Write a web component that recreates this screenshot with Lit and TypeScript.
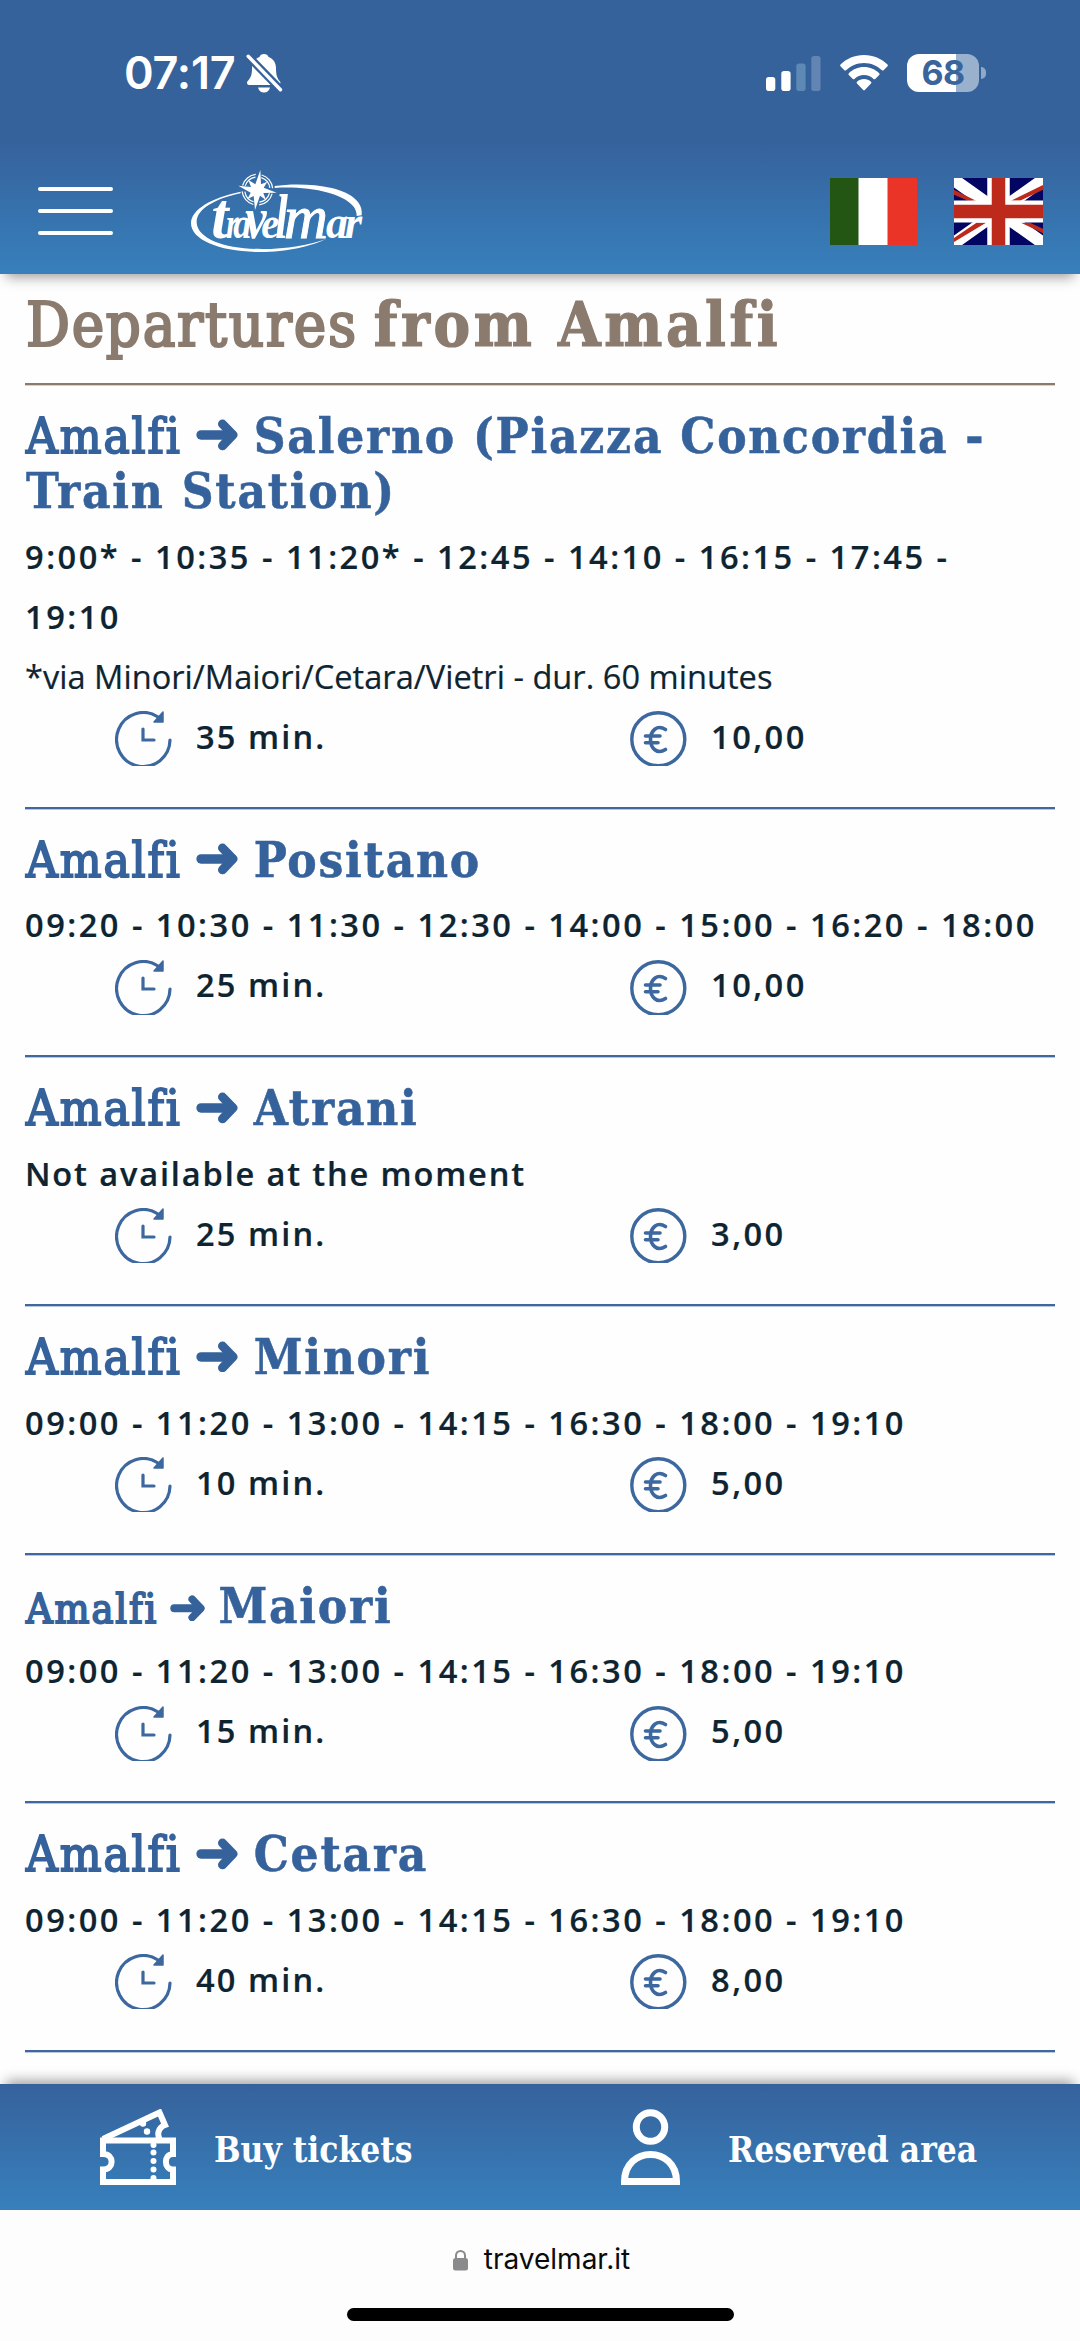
import { LitElement, html, css, svg, nothing } from "lit";
import { customElement, property } from "lit/decorators.js";
import { classMap } from "lit/directives/class-map.js";

interface Route {
  to: string;
  times: string[];
  plain?: boolean;
  note?: string;
  minutes: number;
  price: string;
  smallFrom?: boolean;
}

const ROUTES: Route[] = [
  {
    to: "Salerno (Piazza Concordia - Train Station)",
    times: ["9:00* - 10:35 - 11:20* - 12:45 - 14:10 - 16:15 - 17:45 -", "19:10"],
    note: "*via Minori/Maiori/Cetara/Vietri - dur. 60 minutes",
    minutes: 35,
    price: "10,00",
  },
  { to: "Positano", times: ["09:20 - 10:30 - 11:30 - 12:30 - 14:00 - 15:00 - 16:20 - 18:00"], minutes: 25, price: "10,00" },
  { to: "Atrani", times: ["Not available at the moment"], plain: true, minutes: 25, price: "3,00" },
  { to: "Minori", times: ["09:00 - 11:20 - 13:00 - 14:15 - 16:30 - 18:00 - 19:10"], minutes: 10, price: "5,00" },
  { to: "Maiori", times: ["09:00 - 11:20 - 13:00 - 14:15 - 16:30 - 18:00 - 19:10"], minutes: 15, price: "5,00", smallFrom: true },
  { to: "Cetara", times: ["09:00 - 11:20 - 13:00 - 14:15 - 16:30 - 18:00 - 19:10"], minutes: 40, price: "8,00" },
];

const SLAB = css`"DejaVu Serif Condensed", "DejaVu Serif", serif`;

@customElement("status-bar")
class StatusBar extends LitElement {
  static styles = css`
    :host { display: flex; align-items: center; height: 145px; padding: 0 94px 0 124px; box-sizing: border-box; color: #fff; }
    .clock { font: 600 45px/50px Inter, sans-serif; letter-spacing: -0.2px; }
    .bell { margin-left: 10px; }
    .right { margin-left: auto; display: flex; align-items: center; }
    .wifi { margin: 0 19px; }
    .battery { display: flex; align-items: center; gap: 2px; }
    .cell { width: 72px; height: 38px; border-radius: 12px; background: linear-gradient(90deg, #fff 68%, #9ab1cd 68%);
      color: #3a659c; font: 700 34px/38px Inter, sans-serif; text-align: center; letter-spacing: -0.5px; }
    .nub { width: 5px; height: 12px; border-radius: 0 6px 6px 0; background: #8fa9c9; }
    svg { display: block; }
  `;
  render() {
    return html`
      <span class="clock">07:17</span>
      <svg class="bell" width="37" height="40" viewBox="0 0 37 40">
        <path fill="#fff" d="M18 1c2.300 0 4 1.200 4.500 3 5 1.700 7.500 6 7.500 11 0 7 1 10 4 13.500.8 1 .5 3.500-1.500 3.500H3C1 32 .5 29.500 1.500 28.300 5 24.500 6 22 6 15c0-5 2.500-9.300 7.500-11C14 2.200 15.700 1 18 1zM12 34.500h12c-.6 3-3 5-6 5s-5.400-2-6-5z"/>
        <path d="M0 1l36 37" stroke="#36629c" stroke-width="8"/>
        <path d="M2.200 3.200L34.500 36.800" stroke="#fff" stroke-width="3.400" stroke-linecap="round"/>
      </svg>
      <div class="right">
        <svg width="55" height="36" viewBox="0 0 55 36">
          <rect x="0" y="22" width="9.300" height="14" rx="2.800" fill="#fff"/>
          <rect x="15.300" y="16" width="9.300" height="20" rx="2.800" fill="#fff"/>
          <rect x="30.300" y="8.500" width="9.300" height="27.500" rx="2.800" fill="#5d89b4"/>
          <rect x="45.300" y="1" width="9.300" height="35" rx="2.800" fill="#6285b3"/>
        </svg>
        <svg class="wifi" width="48" height="36" viewBox="0 0 48 36">
          <path fill="#fff" d="M24 0c9.300 0 17.600 3.700 23.500 9.600.5.500.5 1.200 0 1.700l-3.900 4c-.5.400-1.200.4-1.700 0C37.300 10.600 31 7.900 24 7.900S10.700 10.600 6.100 15.300c-.5.400-1.200.4-1.700 0l-3.900-4c-.5-.5-.5-1.200 0-1.700C6.400 3.700 14.700 0 24 0zM24 12c6 0 11.300 2.400 15.200 6.200.5.500.5 1.200 0 1.700l-4 4c-.4.400-1.100.4-1.600 0C31 21.500 27.700 20 24 20s-7 1.500-9.600 3.900c-.5.400-1.200.4-1.600 0l-4-4c-.5-.5-.5-1.200 0-1.700C12.700 14.400 18 12 24 12zM24 24c2.700 0 5.100 1 7 2.700.5.500.5 1.200 0 1.700l-6.200 6.600c-.4.500-1.200.5-1.600 0L17 28.400c-.5-.5-.5-1.200 0-1.700C18.900 25 21.300 24 24 24z"/>
        </svg>
        <div class="battery"><div class="cell">68</div><div class="nub"></div></div>
      </div>`;
  }
}

@customElement("site-logo")
class SiteLogo extends LitElement {
  static styles = css`
    :host, svg { display: block; }
    text { font-family: "Liberation Serif", serif; font-style: italic; font-weight: 700; fill: #fff; }
    .t { font-size: 196px; } .s { font-size: 136px; } .v { font-size: 178px; } .l { font-size: 190px; } .r { font-size: 142px; }
    .m { font-size: 186px; font-weight: 400; stroke: #fff; stroke-width: 3px; }
  `;
  private letter(cls: string, x: number, w: number, ch: string) {
    return svg`<tspan class=${cls} x=${x} textLength=${w} lengthAdjust="spacingAndGlyphs">${ch}</tspan>`;
  }
  render() {
    return html`<svg width="190" height="100" viewBox="0 0 570 300" fill="#fff">
      <path d="M182 95C95 113 33 148 33 190C33 240 120 276 240 276C320 276 395 258 440 236C390 255 320 267 245 267C140 267 53 238 50 188C48 148 105 116 182 100Z"/>
      <path d="M284 78C330 71 400 71 455 84C520 100 550 130 545 166L530 168C532 138 500 114 445 98C395 84 330 80 284 84Z"/>
      <g fill="none" stroke="#fff" stroke-width="3.500">
        <circle cx="232" cy="89" r="46" stroke-dasharray="54 18.200" stroke-dashoffset="-12"/>
        <circle cx="232" cy="89" r="38" stroke-dasharray="42 17.600" stroke-dashoffset="-11"/>
      </g>
      <path d="M241 30L243 73L262 65L251 83L290 98L250 99L258 120L240 107L225 150L221 108L202 118L212 98L175 77L213 81L205 60L226 73Z"/>
      <text y="234">${this.letter("t", 94, 52, "t")}${this.letter("s", 138, 38, "r")}${this.letter("s", 160, 54, "a")}${this.letter("v", 196, 64, "v")}${this.letter("s", 244, 54, "e")}${this.letter("l", 286, 38, "l")}${this.letter("m", 312, 132, "m")}${this.letter("r", 438, 66, "a")}${this.letter("r", 494, 52, "r")}</text>
    </svg>`;
  }
}

@customElement("route-row")
class RouteRow extends LitElement {
  @property({ attribute: false }) route!: Route;
  static styles = css`
    :host { display: block; padding: 24px 0 40.200px; border-bottom: 2px solid #40689f; box-shadow: 0 1px 0 rgba(54, 98, 156, 0.35); color: #0e2431; }
    h2 { margin: 0 0 7px; padding-left: 1px; font: 400 49px/55.500px ${SLAB}; color: #36629c; letter-spacing: 1.750px; -webkit-text-stroke: 0.500px #36629c; }
    .from { font-weight: 400; letter-spacing: 1.900px; -webkit-text-stroke: 1.800px #36629c; line-height: 0; }
    .from.small { font-size: 41px; }
    .arrow { width: 0.878em; height: 0.650em; margin: 0 0.310em 0 0.280em; vertical-align: 0.035em; }
    .line { font: 600 32.600px/60px "Open Sans", sans-serif; letter-spacing: 2.500px; white-space: nowrap; -webkit-text-stroke: 0.200px currentColor; }
    .plain { letter-spacing: 1.850px; }
    .note { font-weight: 400; letter-spacing: 0.020px; }
    .facts { display: grid; grid-template-columns: 1fr 1fr; height: 60px; }
    .fact { display: grid; grid-template-columns: 81.500px auto; justify-content: start; padding-left: 89.500px; }
    .fact svg { display: block; margin-top: 4.500px; }
    .minutes { letter-spacing: 2.100px; }
  `;
  render() {
    const r = this.route;
    return html`
      <h2><span class=${classMap({ from: true, small: !!r.smallFrom })}>Amalfi<svg class="arrow" viewBox="0 0 43 32" fill="none" stroke="#36629c" stroke-linecap="round"><path d="M5 16H36" stroke-width="9.500"/><path d="M26.500 5L37 16L26.500 27" stroke-width="9" stroke-linejoin="round"/></svg></span><b>${r.to}</b></h2>
      ${r.times.map((t) => html`<div class=${classMap({ line: true, plain: !!r.plain })}>${t}</div>`)}
      ${r.note ? html`<div class="line note">${r.note}</div>` : nothing}
      <div class="facts">
        <div class="fact">
          <svg width="57" height="55" viewBox="0 0 57 55" fill="none" stroke="#3c689f" stroke-width="3.200" stroke-linecap="round">
            <path d="M55 29A26.700 27 0 1 1 43 6"/><path d="M28 18V29H39"/>
            <path d="M48 1V11H39Z" fill="#3c689f" stroke-width="1.500" stroke-linejoin="round"/>
          </svg>
          <span class="line minutes">${r.minutes} min.</span>
        </div>
        <div class="fact">
          <svg width="57" height="55" viewBox="0 0 57 55" fill="none" stroke="#3c689f" stroke-width="3.400" stroke-linecap="round">
            <circle cx="28.300" cy="28.300" r="26.500"/>
            <path d="M35.500 18.500C27 13 20.500 20 20.500 28.500S27 44 35.500 38.500M15.500 25H30M15.500 31.800H28" stroke-width="3.600"/>
          </svg>
          <span class="line">${r.price}</span>
        </div>
      </div>`;
  }
}

@customElement("app-root")
class AppRoot extends LitElement {
  static styles = css`
    :host { display: flex; flex-direction: column; width: 1080px; height: 2341px; overflow: hidden; background: #fefefe; }
    svg { display: block; }
    header { position: relative; z-index: 1; flex: none; height: 274px;
      background: linear-gradient(#36629c 0, #36629c 52%, #3780bc 100%); box-shadow: 0 9px 12px -6px rgba(0, 0, 0, 0.4); }
    .nav { display: flex; height: 129px; box-sizing: border-box; padding: 15px 37px 0 38px; align-items: flex-start; }
    .burger { display: grid; gap: 18.300px; margin-top: 26.500px; }
    .burger i { width: 75px; height: 4px; border-radius: 2px; background: #fff; }
    .logo { margin-left: 67px; }
    .flags { margin: 18px 0 0 auto; display: flex; gap: 37px; }
    main { flex: 1; min-height: 0; overflow: hidden; padding: 16px 25px 0; }
    h1 { margin: 0; padding: 0 0 22.500px 1px; border-bottom: 2px solid #8c7b6d; box-shadow: 0 1px 0 rgba(140, 123, 109, 0.35); font: 400 61px/70px ${SLAB}; color: #8b7b6e; white-space: nowrap; }
    h1 span { letter-spacing: 1.700px; -webkit-text-stroke: 2.200px #8b7b6e; }
    h1 b { letter-spacing: 3.600px; -webkit-text-stroke: 1.200px #8b7b6e; margin-left: 16px; }
    .actions { position: relative; z-index: 1; flex: none; height: 126px; display: grid; grid-template-columns: 540px 540px; align-items: center;
      background: linear-gradient(#36629c, #3780bc); box-shadow: 0 -9px 12px -6px rgba(0, 0, 0, 0.4);
      color: #fff; font: 700 35px/40px ${SLAB}; letter-spacing: 0; }
    .action { display: flex; align-items: center; }
    .buy { padding-left: 100px; gap: 38px; }
    .area { padding-left: 81px; gap: 47px; }
    .label { padding-top: 5px; white-space: nowrap; }
    footer { flex: none; height: 131px; background: #fdfdfe; display: flex; flex-direction: column; align-items: center; }
    .url { display: flex; align-items: center; gap: 16px; margin: 31px 0 0 3px; font: 400 28px/37px Inter, sans-serif; color: #0a0a0a; }
    .home { width: 387px; height: 13px; margin-top: 30px; border-radius: 7px; background: #000; }
  `;
  render() {
    return html`
      <header>
        <status-bar></status-bar>
        <div class="nav">
          <div class="burger"><i></i><i></i><i></i></div>
          <site-logo class="logo"></site-logo>
          <div class="flags">
            <svg width="87" height="67" viewBox="0 0 87 67"><path fill="#235513" d="M0 0h29v67H0z"/><path fill="#fff" d="M28.500 0h29.500v67H28.500z"/><path fill="#e93427" d="M57.500 0H87v67H57.500z"/></svg>
            <svg width="89" height="67" viewBox="0 0 89 68" preserveAspectRatio="none">
              <path fill="#020561" d="M0 0h89v68H0z"/>
              <path stroke="#fff" stroke-width="12.500" d="M-4-1L93 69M-4 69L93-1"/>
              <path fill="#bd2a1c" d="M0 12L22 23H14L0 17zM89 7V12L66 23H57zM0 61L22.500 45.500H32L0 65zM67 45.500H76L89 51.500V56z"/>
              <path stroke="#fff" stroke-width="22.500" d="M0 34H89M44.500 0V68"/>
              <path stroke="#bd2a1c" stroke-width="13.500" d="M0 34H89M44.500 0V68"/>
            </svg>
          </div>
        </div>
      </header>
      <main>
        <h1><span>Departures</span><b>from Amalfi</b></h1>
        ${ROUTES.map((r) => html`<route-row .route=${r}></route-row>`)}
      </main>
      <nav class="actions">
        <div class="action buy">
          <svg width="76" height="76" viewBox="0 0 76 76" fill="none" stroke="#fff" stroke-width="6">
            <path d="M3 31.500H73V45C63.500 45 63.500 60.500 73 60.500V73H3V60.500C14.500 60.500 14.500 45 3 45Z"/>
            <path d="M3 30L59.500 3.500L65 16C57.500 19 57 26 60 31"/>
            <g fill="#fff" stroke="none"><circle cx="53.500" cy="36" r="3"/><circle cx="53.500" cy="43.500" r="3"/><circle cx="53.500" cy="52" r="3"/><circle cx="53.500" cy="60.500" r="3"/><circle cx="53.500" cy="69" r="3"/><circle cx="47" cy="22.500" r="3.200"/><circle cx="43" cy="14.500" r="3.200"/></g>
          </svg>
          <span class="label">Buy tickets</span>
        </div>
        <div class="action area">
          <svg width="60" height="76" viewBox="0 0 60 76" fill="none" stroke="#fff" stroke-width="7">
            <ellipse cx="29.500" cy="18" rx="14.200" ry="14.300"/>
            <path d="M3.500 72.500C3.500 36.500 55.500 36.500 55.500 72.500Z"/>
          </svg>
          <span class="label">Reserved area</span>
        </div>
      </nav>
      <footer>
        <div class="url">
          <svg width="15" height="22" viewBox="0 0 15 22"><rect y="9" width="15" height="12.500" rx="2.500" fill="#8a8a8c"/><path d="M3 10V6.500a4.500 4.500 0 0 1 9 0V10" fill="none" stroke="#8a8a8c" stroke-width="2"/></svg>
          <span>travelmar.it</span>
        </div>
        <div class="home"></div>
      </footer>`;
  }
}
